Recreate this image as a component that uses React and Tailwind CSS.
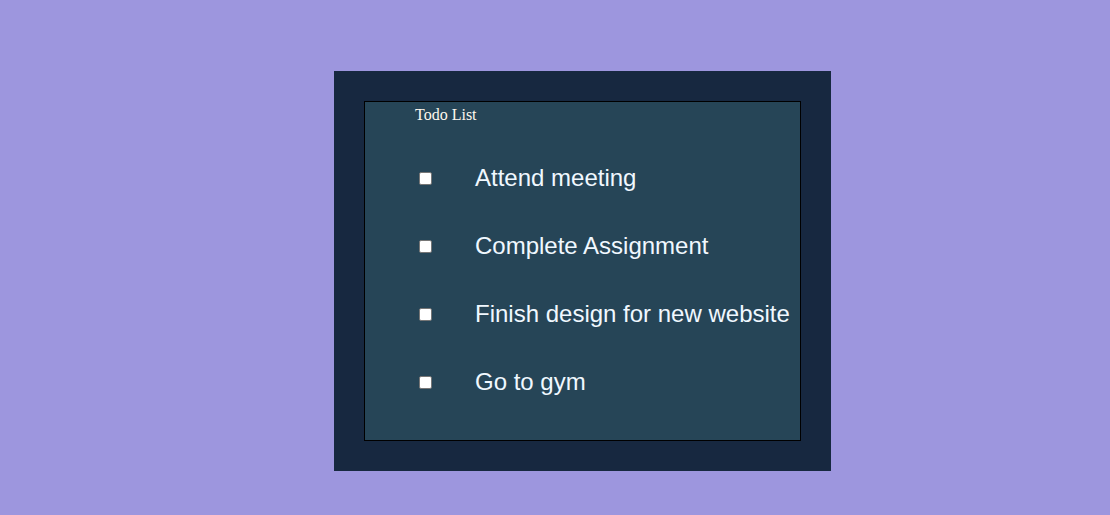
export default function App() {
  const todos = ['Attend meeting', 'Complete Assignment', 'Finish design for new website', 'Go to gym']

  return (
    <div className="min-h-[515px] bg-[#9d96de] pt-[71px]">
      <div className="ml-[334px] w-[497px] h-[400px] bg-[#172840] p-[30px]">
        <div className="w-[437px] h-[340px] bg-[#264557] border border-black pl-[50px] pt-[3px]">
          <h1 className="font-['Liberation_Serif',serif] text-[16px] leading-[19px] text-[#fff8ee]">Todo List</h1>
          <ul className="mt-[20px]">
            {todos.map((t) => (
              <li key={t} className="h-[68px] flex items-center">
                <input type="checkbox" className="w-[13px] h-[13px] ml-[4px] mr-[3px] appearance-none bg-white border border-[#767676] rounded-[2px]" />
                <span className="ml-[40px] font-['Liberation_Sans',Arial,sans-serif] text-[24px] text-[#f0f8ff]">{t}</span>
              </li>
            ))}
          </ul>
        </div>
      </div>
    </div>
  )
}
